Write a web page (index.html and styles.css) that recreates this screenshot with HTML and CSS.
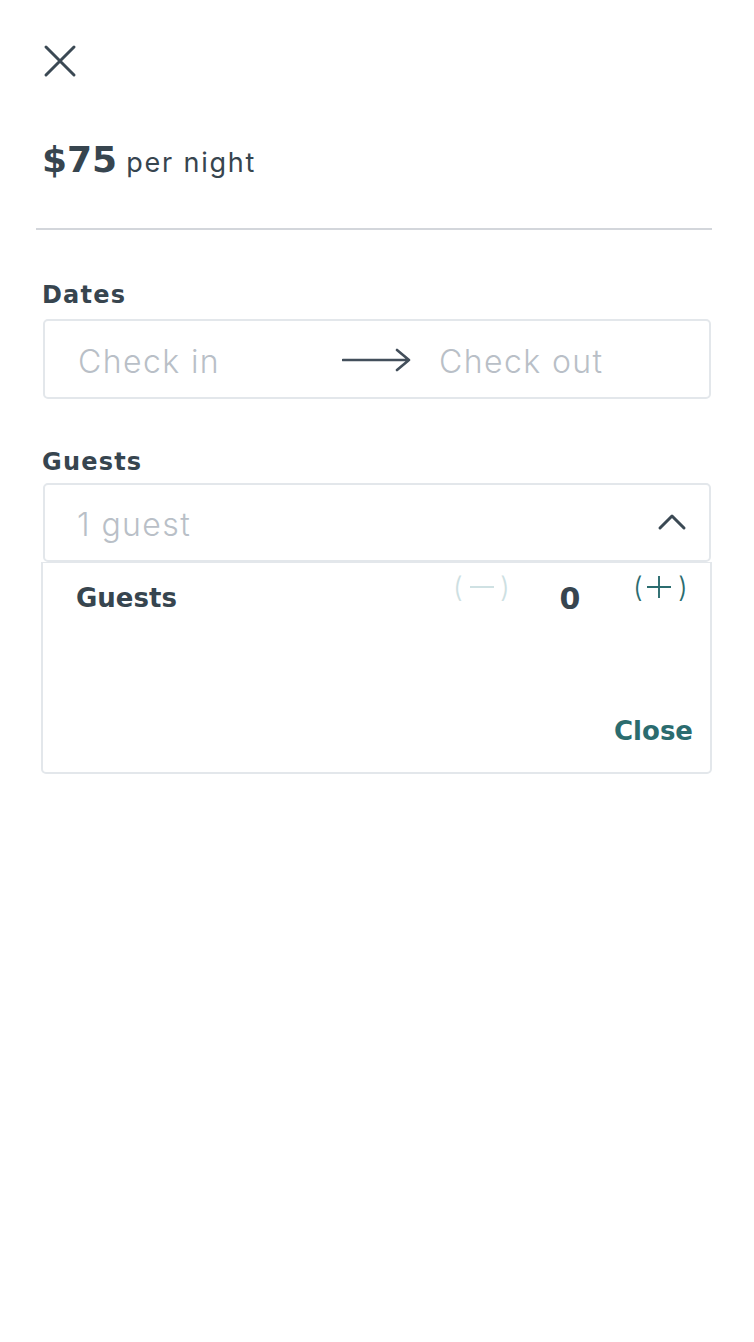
FILE: index.html
```html
<!DOCTYPE html>
<html lang="en">
<head>
<meta charset="utf-8">
<title>Booking</title>
<link rel="stylesheet" href="styles.css">
</head>
<body>
<div class="page">
  <button class="close-btn" aria-label="Close">
    <svg width="34" height="34" viewBox="0 0 34 34"><path d="M3 3 L31 31 M31 3 L3 31" stroke="#3b4954" stroke-width="3" stroke-linecap="round" fill="none"/></svg>
  </button>
  <div class="price"><span class="amount">$75</span><span class="per">per night</span></div>
  <hr class="divider">
  <div class="label dates-label">Dates</div>
  <div class="box dates-box">
    <span class="ph checkin">Check in</span>
    <svg class="arrow" width="70" height="24" viewBox="0 0 70 24"><path d="M1 12 H67 M55 2 L67 12 L55 22" stroke="#434f5b" stroke-width="2.6" stroke-linecap="round" stroke-linejoin="round" fill="none"/></svg>
    <span class="ph checkout">Check out</span>
  </div>
  <div class="label guests-label">Guests</div>
  <div class="box guests-box">
    <span class="ph">1 guest</span>
    <svg class="chev" width="30" height="20" viewBox="0 0 30 20"><path d="M3 17 L15 5 L27 17" stroke="#3b4954" stroke-width="3" stroke-linecap="round" stroke-linejoin="round" fill="none"/></svg>
  </div>
  <div class="dropdown">
    <div class="row">
      <span class="row-label">Guests</span>
      <span class="step minus">
        <span class="paren">(</span>
        <svg class="sym sym-minus" width="24" height="22" viewBox="0 0 24 22"><path d="M0 11 H24" stroke="currentColor" stroke-width="1.9" fill="none"/></svg>
        <span class="paren">)</span>
      </span>
      <span class="count">0</span>
      <span class="step plus">
        <span class="paren">(</span>
        <svg class="sym sym-plus" width="24" height="22" viewBox="0 0 24 22"><path d="M0 11 H24 M12 0 V22" stroke="currentColor" stroke-width="1.9" fill="none"/></svg>
        <span class="paren">)</span>
      </span>
    </div>
    <div class="foot"><span class="close-link">Close</span></div>
  </div>
</div>
</body>
</html>
```
FILE: styles.css
```css
* { box-sizing: border-box; }
html, body { margin: 0; padding: 0; background: #fff; }
body {
  font-family: "Inter", "Noto Sans", sans-serif;
  color: #37454f;
  width: 754px;
  height: 1342px;
}
.page { padding: 0 42px 0 42px; }
.close-btn {
  display: block;
  margin: 44px 0 0 1px;
  padding: 0;
  border: 0;
  background: none;
  width: 34px;
  height: 34px;
}
.close-btn svg { display: block; }
.price {
  margin-top: 60px;
  height: 44px;
  line-height: 44px;
  white-space: nowrap;
  display: flex;
  align-items: baseline;
  gap: 9px;
}
.amount { font-family: "DejaVu Sans", sans-serif; font-size: 36px; font-weight: 700; }
.per { font-size: 27px; font-weight: 400; letter-spacing: 1.8px; }
.divider {
  margin: 46px 0 0 -6px;
  border: 0;
  height: 2px;
  background: #d3d6db;
  width: 676px;
}
.label {
  font-family: "DejaVu Sans", sans-serif;
  font-size: 24px;
  font-weight: 700;
  line-height: 30px;
  height: 30px;
  letter-spacing: 1.2px;
}
.dates-label { margin-top: 50px; }
.box {
  border: 2px solid #e3e7eb;
  border-radius: 5px;
  display: flex;
  align-items: center;
  margin-left: 1px;
  width: 668px;
}
.dates-box { margin-top: 9px; height: 80px; padding: 4px 0 0 33px; }
.ph { font-size: 32px; font-weight: 300; color: #b9bfc7; white-space: nowrap; letter-spacing: 1.4px; }
.checkin { width: 264px; }
.arrow { display: block; flex: none; margin-top: -2px; }
.checkout { margin-left: 27px; }
.guests-label { margin-top: 48px; }
.guests-box {
  margin-top: 6px;
  height: 79px;
  padding: 4px 22px 0 32px;
  justify-content: space-between;
}
.chev { display: block; margin-top: -8px; }
.dropdown {
  margin-left: -1px;
  width: 671px;
  height: 212px;
  border: 2px solid #e3e7eb;
  border-top-width: 1px;
  border-radius: 0 0 5px 5px;
  padding: 0 22px 0 33px;
  display: flex;
  flex-direction: column;
}
.row {
  display: flex;
  align-items: flex-start;
  height: 70px;
}
.row-label {
  font-family: "DejaVu Sans", sans-serif;
  font-size: 26px;
  font-weight: 700;
  margin-top: 19px;
  line-height: 32px;
  flex: 1;
}
.step {
  display: flex;
  align-items: center;
  height: 26px;
  margin-top: 11px;
}
.paren {
  display: block;
  width: 7px;
  text-align: center;
  font-size: 28px;
  font-weight: 300;
  line-height: 26px;
}
.sym { display: block; flex: none; }
.minus { color: #cde0e2; }
.minus .sym { margin: 0 6px 0 10px; }
.plus { color: #2b6c6f; margin-right: 3px; }
.plus .sym { margin: 0 7px; }
.count {
  font-family: "DejaVu Sans", sans-serif;
  font-size: 30px;
  font-weight: 700;
  line-height: 32px;
  margin-top: 20px;
  width: 126px;
  text-align: center;
}
.foot {
  display: flex;
  justify-content: flex-end;
  align-items: flex-start;
  margin-top: 82px;
  margin-right: -5px;
}
.close-link {
  font-family: "DejaVu Sans", sans-serif;
  font-size: 26px;
  font-weight: 700;
  color: #2b6c6f;
  line-height: 32px;
}
```
